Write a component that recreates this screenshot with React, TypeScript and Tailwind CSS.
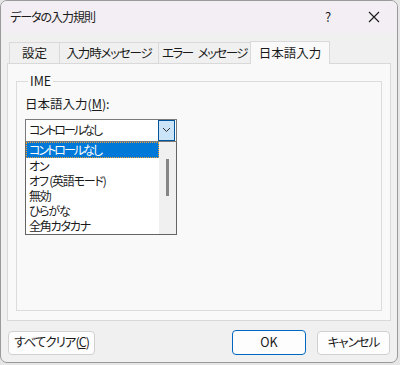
import React from 'react';

const tabs = [
    { t: '設定', w: 'w-[51px]', k: 'tracking-normal' },
    { t: '入力時メッセージ', w: 'w-[100px]', k: 'tracking-[-1.2px]' },
    { t: 'エラー メッセージ', w: 'w-[93px]', k: 'tracking-[-1.5px]' },
    { t: '日本語入力', w: 'w-[80px]', k: 'tracking-normal' },
];
const items = ['コントロールなし', 'オン', 'オフ (英語モード)', '無効', 'ひらがな', '全角カタカナ'];

function TabLabel({text}: {text: string}): JSX.Element {
    const parts = text.split(' ');
    if (parts.length === 1) return <>{text}</>;
    return <>{parts[0]}<span className="ml-[5px]">{parts[1]}</span></>;
}

function App(): JSX.Element {
    return (
        <div className="w-[400px] h-[365px] bg-[#e6e6e6] text-[12px] text-[#1a1a1a] font-['Noto_Sans_CJK_JP','Noto_Sans',sans-serif] [font-feature-settings:'palt']">
            <div className="w-[398px] h-[363px] bg-[#f0f0f0] border border-[#9a9a9a] rounded-[7px] overflow-hidden flex flex-col">
                {/* title bar */}
                <div className="h-[32px] bg-[#f3eef3] flex items-center pl-[9px] shrink-0">
                    <span className="text-[12px] tracking-[-1px]">データの入力規則</span>
                    <span className="ml-auto w-[46px] text-center text-[13px]">?</span>
                    <span className="w-[46px] flex justify-center">
                        <svg width="12" height="12" viewBox="0 0 12 12">
                            <path d="M1 1 L11 11 M11 1 L1 11" stroke="#1a1a1a" strokeWidth="1.1" />
                        </svg>
                    </span>
                </div>

                {/* tabs */}
                <div className="px-[6px] pt-[7px]">
                    <div className="flex items-end h-[23px] pl-[2px]">
                        {tabs.map((tab, i) => (
                            <div key={tab.t}
                                 className={i === 3
                                     ? `${tab.w} ${tab.k} h-[23px] bg-[#f9f9f9] border border-b-0 border-[#d9d9d9] flex items-center justify-center -mb-px -ml-px relative z-10 text-[12.5px] whitespace-nowrap`
                                     : `${tab.w} ${tab.k} h-[21px] border border-b-0 border-[#d9d9d9] -ml-px first:ml-0 flex items-center justify-center text-[12.5px] whitespace-nowrap`}
                            >
                                <TabLabel text={tab.t} />
                            </div>
                        ))}
                    </div>

                    {/* tab panel */}
                    <div className="h-[258px] bg-[#f9f9f9] border border-[#d9d9d9] px-[8px] pt-[10px]">
                        <fieldset className="h-[237px] border border-[#dcdcdc] px-[8px]">
                            <legend className="ml-[3px] px-[2px] text-[12.5px] leading-[14px]">IME</legend>
                            <div className="mt-[7px] text-[12.5px]">日本語入力(<u>M</u>):</div>
                            <div className="mt-[5px] w-[152px]">
                                <div className="h-[23px] bg-white border border-[#7a7a7a] flex items-center pl-[3px]">
                                    <span className="tracking-[-2px]">コントロールなし</span>
                                    <span className="ml-auto mr-px w-[17px] h-[21px] bg-[#cce4f7] border border-[#005499] flex items-center justify-center">
                                        <svg width="9" height="6" viewBox="0 0 9 6">
                                            <path d="M1 1 L4.5 4.5 L8 1" fill="none" stroke="#333" strokeWidth="1" />
                                        </svg>
                                    </span>
                                </div>
                                <div className="h-[93px] bg-white border border-[#646464] border-t-0 flex">
                                    <div className="flex-1 flex flex-col overflow-hidden">
                                        {items.map((it, i) => (
                                            <div key={it}
                                                 className={i === 0
                                                     ? 'h-[16px] leading-[14px] pl-[2px] bg-[#0078d7] text-white border border-dotted border-[#f0a030] whitespace-nowrap tracking-[-2px]'
                                                     : 'h-[15px] leading-[15px] pl-[3px] whitespace-nowrap tracking-[-1.2px]'}
                                            >{it}</div>
                                        ))}
                                    </div>
                                    <div className="w-[17px] bg-[#f0f0f0] flex justify-center pt-[17px]">
                                        <div className="w-[3px] h-[37px] bg-[#858585]" />
                                    </div>
                                </div>
                            </div>
                        </fieldset>
                    </div>
                </div>

                {/* buttons */}
                <div className="flex items-center mt-[9px] px-[7px]">
                    <button className="h-[24px] w-[87px] bg-[#fdfdfd] border border-[#d0d0d0] rounded-[4px] text-[12.5px] whitespace-nowrap tracking-[-1px]">
                        すべてクリア(<u>C</u>)
                    </button>
                    <button className="ml-auto h-[25px] w-[74px] bg-[#fdfdfd] border border-[#0067c0] rounded-[4px] text-[12.5px]">
                        OK
                    </button>
                    <button className="ml-[11px] h-[24px] w-[73px] bg-[#fdfdfd] border border-[#d0d0d0] rounded-[4px] text-[12.5px] whitespace-nowrap tracking-[-1px]">
                        キャンセル
                    </button>
                </div>
            </div>
        </div>
    );
}

export default App;
